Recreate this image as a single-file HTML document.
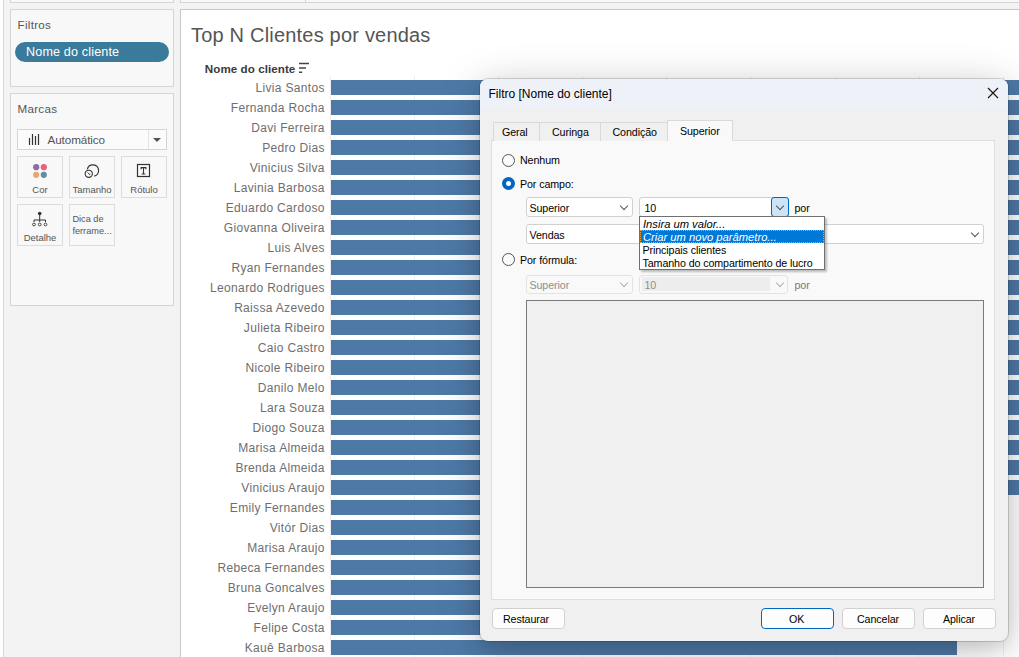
<!DOCTYPE html>
<html><head><meta charset="utf-8">
<style>
*{box-sizing:border-box;margin:0;padding:0}
html,body{width:1019px;height:657px;overflow:hidden;background:#f3f3f3;font-family:"Liberation Sans",sans-serif}
.a{position:absolute}
#root{position:relative;width:1019px;height:657px;overflow:hidden}
.pnl{position:absolute;border:1px solid #d5d5d5;background:#f8f8f8}
.lbl{position:absolute;left:180px;width:144.8px;text-align:right;font-size:12px;color:#6e6e6e;line-height:1;letter-spacing:0.33px;white-space:nowrap}
.bar{position:absolute;left:331px;height:15px;background:#4e79a7}
.grid{position:absolute;top:76px;width:1px;height:590px;background:#efefef}
.mk{position:absolute;border:1px solid #dcdcdc;background:#f8f8f8;width:46px;height:42px}
.mkl{position:absolute;left:0;width:44px;text-align:center;font-size:9.5px;color:#555;white-space:nowrap;line-height:1}
.dlg{font-size:11px;color:#000}
.tab{position:absolute;top:122px;height:19px;border:1px solid #d9d9d9;border-bottom:none;background:#f0f0f0}
.cmb{position:absolute;height:20px;border:1px solid #d0d0d0;border-radius:3px;background:#fff;font-size:11px;line-height:18px;padding-left:3px;color:#000;white-space:nowrap}
.chev{position:absolute;width:6px;height:6px;border-right:1px solid #555;border-bottom:1px solid #555;transform:rotate(45deg)}
.btn{position:absolute;top:608px;width:73px;height:21px;border:1px solid #d0d0d0;border-radius:4px;background:#fdfdfd;font-size:11px;line-height:19px;text-align:center;color:#000}
.radio{position:absolute;width:13px;height:13px;border-radius:50%;border:1px solid #555;background:#fafafa}
.txt{position:absolute;white-space:nowrap}
.t1{position:absolute;white-space:nowrap;line-height:1;font-size:10.7px;letter-spacing:-0.1px;color:#000}
</style></head><body><div id="root">
<!-- left strip -->
<div class="a" style="left:0;top:0;width:3px;height:657px;background:#fdfdfd"></div>
<div class="a" style="left:3px;top:0;width:1px;height:657px;background:#d8d8d8"></div>
<!-- top strip panels -->
<div class="pnl" style="left:10px;top:-10px;width:164px;height:13px"></div>
<div class="pnl" style="left:180px;top:-10px;width:126px;height:13px"></div>
<div class="pnl" style="left:305px;top:-10px;width:730px;height:13px"></div>
<!-- Filtros -->
<div class="pnl" style="left:10px;top:9px;width:164px;height:78px"></div>
<div class="t1" style="left:17.5px;top:19px;font-size:11.6px;letter-spacing:0.3px;color:#555">Filtros</div>
<div class="a" style="left:15px;top:42px;width:154px;height:20px;border-radius:10px;background:#3a7b9b"></div>
<div class="t1" style="left:26px;top:46.3px;font-size:12.6px;letter-spacing:0.15px;color:#fff">Nome do cliente</div>
<!-- Marcas -->
<div class="pnl" style="left:10px;top:93px;width:164px;height:213px"></div>
<div class="t1" style="left:17.5px;top:103.4px;font-size:11.6px;letter-spacing:0.3px;color:#555">Marcas</div>
<div class="a" style="left:17px;top:129px;width:150px;height:21px;border:1px solid #d5d5d5;background:#fbfbfb"></div>
<div class="a" style="left:148px;top:130px;width:1px;height:19px;background:#e3e3e3"></div>
<div class="a" style="left:153px;top:138px;width:0;height:0;border-left:4px solid transparent;border-right:4px solid transparent;border-top:4px solid #555"></div>
<svg class="a" style="left:28px;top:132px" width="12" height="13"><path d="M1.5 6v7M4.5 2v11M7.5 4v9M10.5 2v11" stroke="#333" stroke-width="1.2"/></svg>
<div class="t1" style="left:47.5px;top:134.1px;font-size:11.7px;color:#555">Automático</div>
<div class="mk" style="left:17px;top:156px"></div>
<div class="mk" style="left:69px;top:156px"></div>
<div class="mk" style="left:121px;top:156px"></div>
<div class="mk" style="left:17px;top:204px"></div>
<div class="mk" style="left:69px;top:204px"></div>
<svg class="a" style="left:32px;top:163px" width="16" height="16"><circle cx="4.2" cy="4.2" r="3.1" fill="#8e6ea0"/><circle cx="11.8" cy="4.2" r="3.1" fill="#e76479"/><circle cx="4.2" cy="11.8" r="3.1" fill="#e9a66f"/><circle cx="11.8" cy="11.8" r="3.1" fill="#5b8fa8"/></svg>
<div class="mkl" style="left:17px;top:185px;width:46px">Cor</div>
<svg class="a" style="left:82px;top:163px" width="18" height="17"><path d="M5.3 6.3A5.7 5.7 0 1 1 12.1 13.1" fill="none" stroke="#333" stroke-width="1.15"/><circle cx="6.75" cy="10.8" r="3.6" fill="none" stroke="#333" stroke-width="1.1"/><path d="M5.6 9.4l2.6 2.6" stroke="#333" stroke-width="1"/></svg>
<div class="mkl" style="left:69px;top:185px;width:46px">Tamanho</div>
<svg class="a" style="left:136px;top:163px" width="15" height="15"><rect x="1.5" y="1.5" width="12" height="12" fill="none" stroke="#333" stroke-width="1.2"/><path d="M4.6 4.6h5.8M5.1 4.4v1.8M9.9 4.4v1.8M7.5 4.6v6.4M5.6 11h3.8" stroke="#333" stroke-width="1.1"/></svg>
<div class="mkl" style="left:121px;top:185px;width:46px">Rótulo</div>
<svg class="a" style="left:31px;top:209px" width="18" height="18"><circle cx="8.7" cy="4.5" r="1.8" fill="#333"/><path d="M8.7 5v6M3 11h11.5M3 11v2M8.7 11v2M14.5 11v2" stroke="#333" stroke-width="1"/><circle cx="3" cy="15.5" r="1.4" fill="none" stroke="#333" stroke-width=".9"/><circle cx="8.7" cy="15.5" r="1.4" fill="none" stroke="#333" stroke-width=".9"/><circle cx="14.5" cy="15.5" r="1.4" fill="none" stroke="#333" stroke-width=".9"/></svg>
<div class="mkl" style="left:17px;top:232.5px;width:46px">Detalhe</div>
<div class="txt" style="left:72.4px;top:213px;font-size:9.2px;color:#555;line-height:12.2px">Dica de<br>ferrame...</div>
<!-- chart panel -->
<div class="a" style="left:180px;top:9px;width:900px;height:700px;border:1px solid #c8c8c8;background:#fff"></div>
<div class="t1" style="left:191px;top:24.9px;font-size:20px;color:#555;letter-spacing:0.2px">Top N Clientes por vendas</div>
<div class="t1" style="left:204.8px;top:62.8px;font-size:11.6px;font-weight:bold;letter-spacing:0.07px;color:#3a3a3a">Nome do cliente</div>
<svg class="a" style="left:299px;top:62px" width="12" height="12"><path d="M0 1.5h10M0 6h7M0 10.3h3.2" stroke="#444" stroke-width="1.4"/></svg>
<div class="a" style="left:330px;top:76px;width:1px;height:590px;background:#ececec"></div>
<div class="grid" style="left:414px"></div><div class="grid" style="left:498px"></div><div class="grid" style="left:582px"></div><div class="grid" style="left:666px"></div><div class="grid" style="left:750px"></div><div class="grid" style="left:835px"></div><div class="grid" style="left:919px"></div><div class="grid" style="left:1003px"></div>
<div class="lbl" style="top:82.2px">Livia Santos</div><div class="bar" style="top:80px;width:708px"></div>
<div class="lbl" style="top:102.2px">Fernanda Rocha</div><div class="bar" style="top:100px;width:708px"></div>
<div class="lbl" style="top:122.2px">Davi Ferreira</div><div class="bar" style="top:120px;width:708px"></div>
<div class="lbl" style="top:142.2px">Pedro Dias</div><div class="bar" style="top:140px;width:708px"></div>
<div class="lbl" style="top:162.2px">Vinicius Silva</div><div class="bar" style="top:160px;width:708px"></div>
<div class="lbl" style="top:182.2px">Lavinia Barbosa</div><div class="bar" style="top:180px;width:708px"></div>
<div class="lbl" style="top:202.2px">Eduardo Cardoso</div><div class="bar" style="top:200px;width:708px"></div>
<div class="lbl" style="top:222.2px">Giovanna Oliveira</div><div class="bar" style="top:220px;width:708px"></div>
<div class="lbl" style="top:242.2px">Luis Alves</div><div class="bar" style="top:240px;width:708px"></div>
<div class="lbl" style="top:262.2px">Ryan Fernandes</div><div class="bar" style="top:260px;width:708px"></div>
<div class="lbl" style="top:282.2px">Leonardo Rodrigues</div><div class="bar" style="top:280px;width:708px"></div>
<div class="lbl" style="top:302.2px">Raissa Azevedo</div><div class="bar" style="top:300px;width:708px"></div>
<div class="lbl" style="top:322.2px">Julieta Ribeiro</div><div class="bar" style="top:320px;width:708px"></div>
<div class="lbl" style="top:342.2px">Caio Castro</div><div class="bar" style="top:340px;width:708px"></div>
<div class="lbl" style="top:362.2px">Nicole Ribeiro</div><div class="bar" style="top:360px;width:708px"></div>
<div class="lbl" style="top:382.2px">Danilo Melo</div><div class="bar" style="top:380px;width:708px"></div>
<div class="lbl" style="top:402.2px">Lara Souza</div><div class="bar" style="top:400px;width:708px"></div>
<div class="lbl" style="top:422.2px">Diogo Souza</div><div class="bar" style="top:420px;width:708px"></div>
<div class="lbl" style="top:442.2px">Marisa Almeida</div><div class="bar" style="top:440px;width:708px"></div>
<div class="lbl" style="top:462.2px">Brenda Almeida</div><div class="bar" style="top:460px;width:708px"></div>
<div class="lbl" style="top:482.2px">Vinicius Araujo</div><div class="bar" style="top:480px;width:708px"></div>
<div class="lbl" style="top:502.2px">Emily Fernandes</div><div class="bar" style="top:500px;width:638px"></div>
<div class="lbl" style="top:522.2px">Vitór Dias</div><div class="bar" style="top:520px;width:637px"></div>
<div class="lbl" style="top:542.2px">Marisa Araujo</div><div class="bar" style="top:540px;width:636px"></div>
<div class="lbl" style="top:562.2px">Rebeca Fernandes</div><div class="bar" style="top:560px;width:635px"></div>
<div class="lbl" style="top:582.2px">Bruna Goncalves</div><div class="bar" style="top:580px;width:634px"></div>
<div class="lbl" style="top:602.2px">Evelyn Araujo</div><div class="bar" style="top:600px;width:633px"></div>
<div class="lbl" style="top:622.2px">Felipe Costa</div><div class="bar" style="top:620px;width:632px"></div>
<div class="lbl" style="top:642.2px">Kauê Barbosa</div><div class="bar" style="top:640px;width:626px"></div>
<!-- dialog -->
<div class="a" style="left:480px;top:79px;width:528px;height:562px;border-radius:8px;background:#f0f0f0;box-shadow:0 0 0 1px rgba(0,0,0,0.15),0 8px 40px rgba(0,0,0,0.26),0 6px 12px rgba(0,0,0,0.06);overflow:hidden">
  <div class="a" style="left:0;top:0;width:528px;height:29.5px;background:#eef2f8"></div>
</div>
<div class="t1" style="left:488.5px;top:88.4px;font-size:12px;letter-spacing:0;color:#000">Filtro [Nome do cliente]</div>
<svg class="a" style="left:987px;top:87px" width="12" height="12"><path d="M1 1L11 11M11 1L1 11" stroke="#1a1a1a" stroke-width="1.2"/></svg>
<!-- tab panel -->
<div class="a" style="left:491px;top:140px;width:504px;height:460px;border:1px solid #dedede;background:#f9f9f9"></div>
<div class="tab" style="left:493px;width:47px"></div>
<div class="tab" style="left:539px;width:62px"></div>
<div class="tab" style="left:600px;width:68px"></div>
<div class="tab" style="left:667px;top:120px;height:21px;width:66px;background:#f9f9f9"></div>
<div class="t1" style="left:502px;top:127.3px">Geral</div>
<div class="t1" style="left:552px;top:127.3px">Curinga</div>
<div class="t1" style="left:612.5px;top:127.3px">Condição</div>
<div class="t1" style="left:680px;top:126.3px">Superior</div>
<!-- radios -->
<div class="radio" style="left:502px;top:153.5px"></div>
<div class="t1" style="left:520px;top:155.4px">Nenhum</div>
<div class="a" style="left:502px;top:176.5px;width:13px;height:13px;border-radius:50%;background:#0067c0"></div>
<div class="a" style="left:506px;top:180.5px;width:5px;height:5px;border-radius:50%;background:#fff"></div>
<div class="t1" style="left:520px;top:178.6px">Por campo:</div>
<div class="radio" style="left:502px;top:253px"></div>
<div class="t1" style="left:520px;top:255.0px">Por fórmula:</div>
<!-- combos -->
<div class="cmb" style="left:526px;top:197px;width:107px"></div>
<div class="t1" style="left:529.5px;top:203.0px">Superior</div>
<div class="chev" style="left:621px;top:203px"></div>
<div class="cmb" style="left:639px;top:197px;width:150px"></div>
<div class="a" style="left:771px;top:197px;width:18px;height:20px;border:1px solid #0067c0;border-radius:3px;background:#cce4f7"></div>
<div class="chev" style="left:777px;top:203px"></div>
<div class="t1" style="left:644.5px;top:202.9px">10</div>
<div class="t1" style="left:794.5px;top:202.9px">por</div>
<div class="cmb" style="left:526px;top:224px;width:458px"></div>
<div class="t1" style="left:529.5px;top:230.1px">Vendas</div>
<div class="chev" style="left:972px;top:230px"></div>
<!-- disabled -->
<div class="cmb" style="left:526px;top:275px;width:107px;height:19px;background:#f9f9f9;border-color:#e3e3e3"></div>
<div class="t1" style="left:529.5px;top:280.0px;color:#8e8e8e">Superior</div>
<div class="chev" style="left:621px;top:280px;border-color:#b0b0b0"></div>
<div class="cmb" style="left:639px;top:275px;width:149px;height:19px;background:#f9f9f9;border-color:#e3e3e3"></div>
<div class="a" style="left:642px;top:277px;width:128px;height:14px;background:#ededed"></div>
<div class="t1" style="left:644.5px;top:280.0px;color:#8e8e8e">10</div>
<div class="chev" style="left:777px;top:280px;border-color:#b0b0b0"></div>
<div class="t1" style="left:794.5px;top:279.8px;color:#777">por</div>
<!-- textarea -->
<div class="a" style="left:526px;top:300px;width:458px;height:288px;border:1px solid #7a7a7a;background:#f0f0f0"></div>
<!-- dropdown list -->
<div class="a" style="left:639px;top:216px;width:186px;height:54px;border:1px solid #707070;background:#fff;box-shadow:2px 2px 2px rgba(0,0,0,0.25)"></div>
<div class="a" style="left:640px;top:230px;width:184px;height:13px;background:#0078d7;outline:1px dotted #e8a040;outline-offset:-1px"></div>
<div class="t1" style="left:643px;top:218.6px;font-style:italic;font-size:11.2px;letter-spacing:0">Insira um valor...</div>
<div class="t1" style="left:643px;top:231.8px;font-style:italic;font-size:11.2px;letter-spacing:0;color:#fff">Criar um novo parâmetro...</div>
<div class="t1" style="left:642.5px;top:245.1px">Principais clientes</div>
<div class="t1" style="left:642.5px;top:257.8px">Tamanho do compartimento de lucro</div>
<!-- buttons -->
<div class="btn" style="left:492px"></div>
<div class="btn" style="left:761px;border-color:#0067c0"></div>
<div class="btn" style="left:842px"></div>
<div class="btn" style="left:923px"></div>
<div class="t1" style="left:503px;top:614.4px">Restaurar</div>
<div class="t1" style="left:789px;top:614.4px">OK</div>
<div class="t1" style="left:857px;top:614.4px">Cancelar</div>
<div class="t1" style="left:943px;top:614.4px">Aplicar</div>

</div></body></html>
